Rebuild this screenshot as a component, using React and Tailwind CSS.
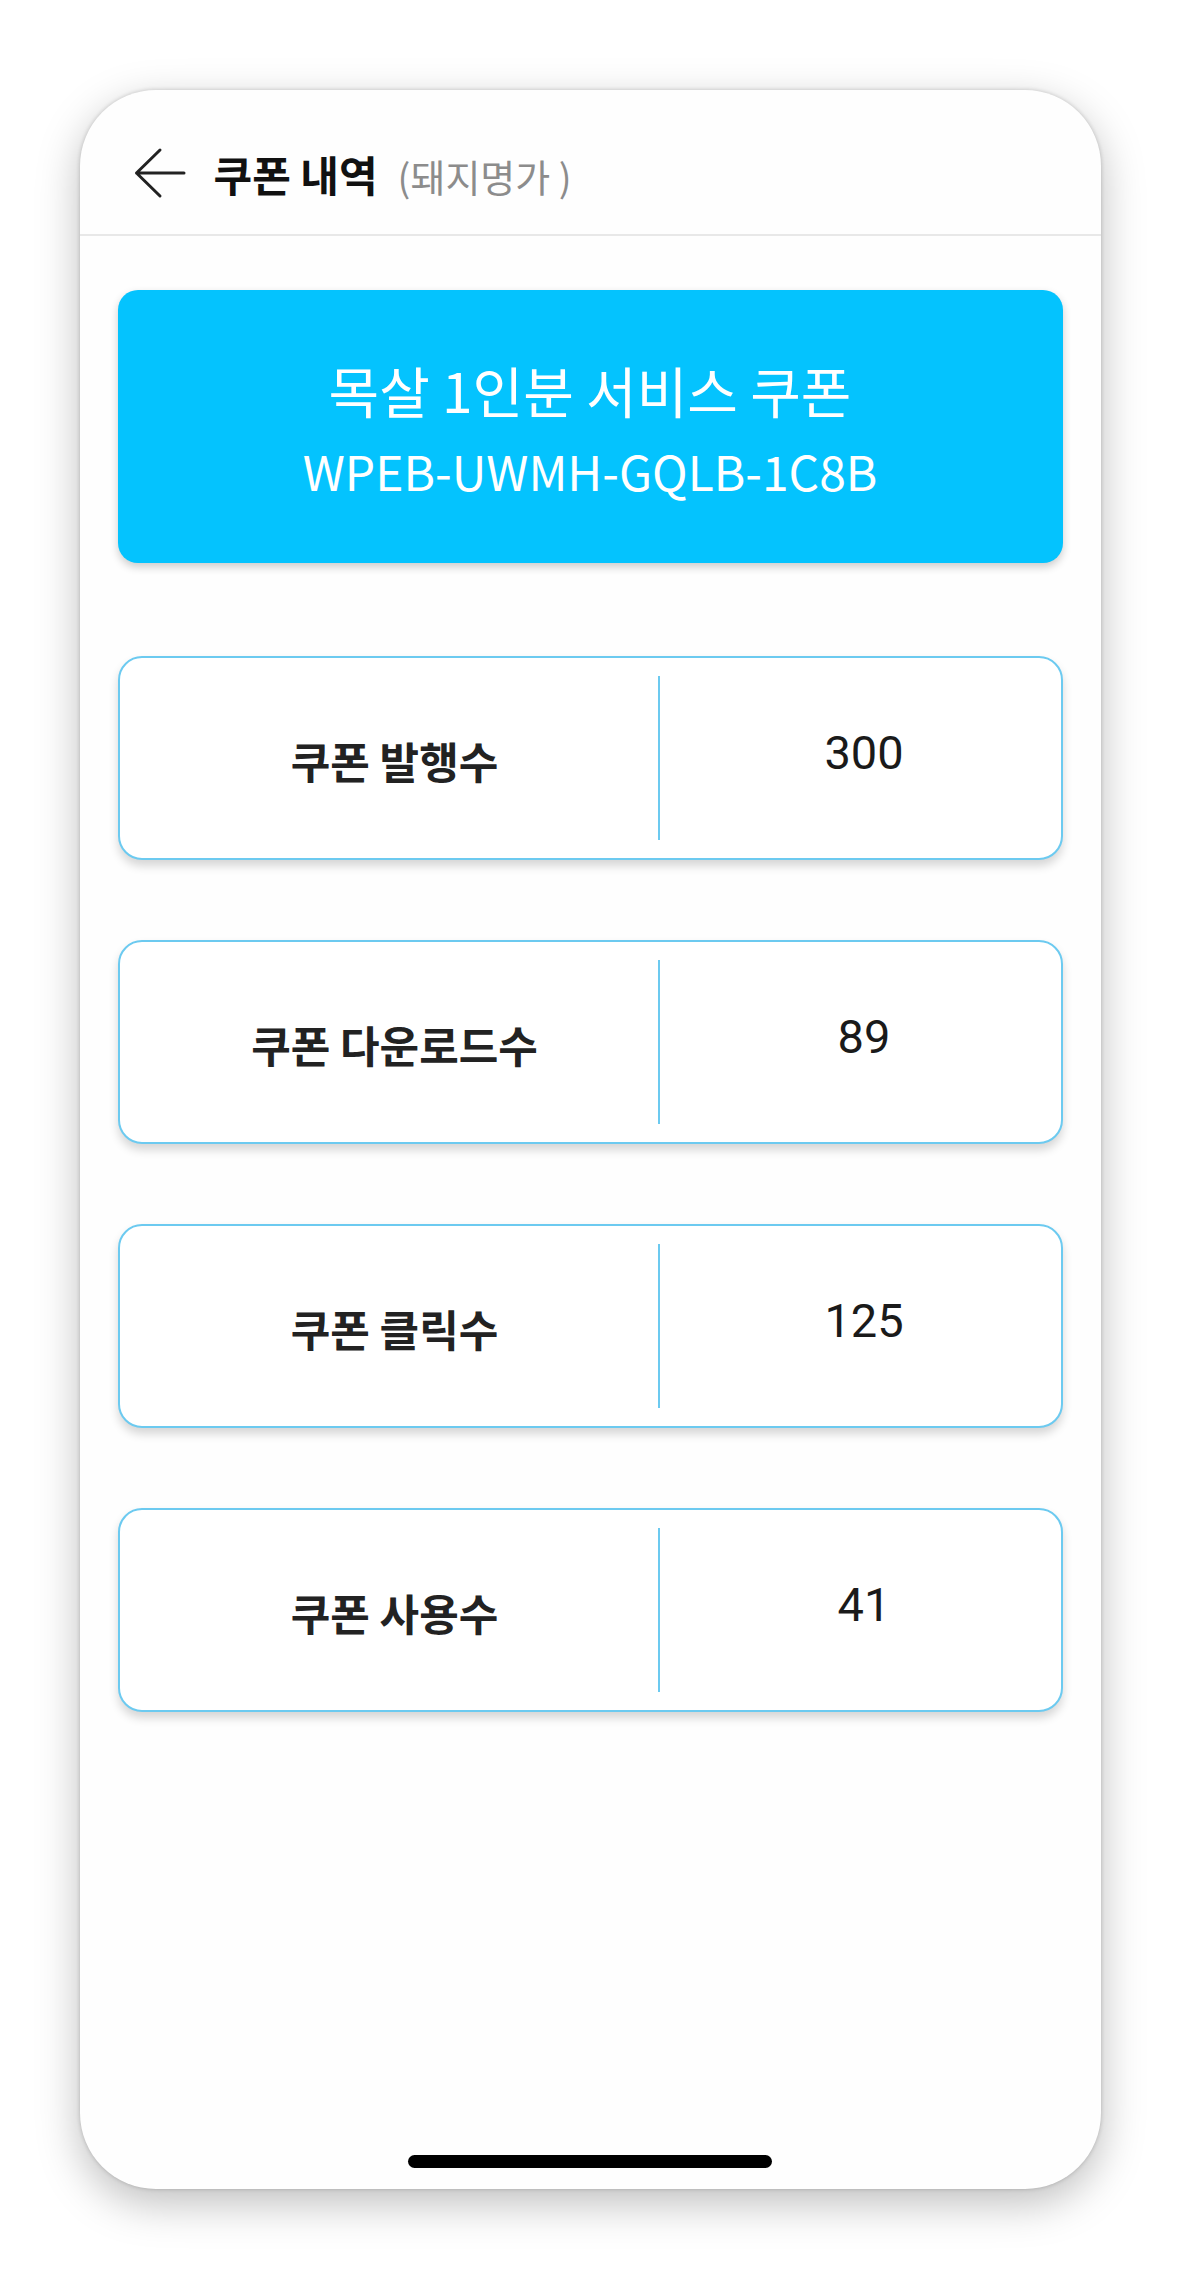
import React from "react";

const stats = [
  { label: "쿠폰 발행수", value: "300" },
  { label: "쿠폰 다운로드수", value: "89" },
  { label: "쿠폰 클릭수", value: "125" },
  { label: "쿠폰 사용수", value: "41" },
];

const BackArrow = () => (
  <svg width="52" height="52" viewBox="0 0 52 52" fill="none">
    <path
      d="M2.5 26H50M26 3 2.5 26 26 49"
      stroke="#222"
      strokeWidth="3"
      strokeLinecap="round"
      strokeLinejoin="round"
    />
  </svg>
);

const StatCard = ({ label, value }) => (
  <div className="flex h-[204px] rounded-[24px] border-2 border-[#6ccaf0] bg-white shadow-[0_6px_10px_rgba(0,0,0,0.16)]">
    <div className="flex w-[538px] items-center justify-center pl-[12px] pt-[4px] text-[43px] font-bold text-[#222]">
      {label}
    </div>
    <div className="my-[18px] w-[2px] bg-[#6ccaf0]" />
    <div className="flex flex-1 items-center justify-center pb-[10px] pl-[8px] font-['Roboto',sans-serif] text-[47px] text-[#1a1a1a]">
      {value}
    </div>
  </div>
);

const App = () => {
  return (
    <div className="min-h-[2280px] bg-white pt-[90px] font-['Noto_Sans_CJK_KR','Noto_Sans',sans-serif]">
      <div className="mx-auto flex h-[2099px] w-[1021px] flex-col overflow-hidden rounded-[76px] bg-[#fefefe] shadow-[0_14px_44px_rgba(0,0,0,0.26),0_0_4px_rgba(0,0,0,0.2)]">
        {/* header */}
        <div className="flex h-[146px] items-center border-b-2 border-[#e8e8e8] pl-[54px] pt-[22px]">
          <BackArrow />
          <div className="ml-[28px] flex items-baseline">
            <span className="text-[42px] font-bold text-[#111]">쿠폰 내역</span>
            <span className="ml-[20px] text-[38px] text-[#8c8c8c]">(돼지명가 )</span>
          </div>
        </div>

        <div className="flex flex-col px-[38px] pt-[54px]">
          {/* coupon banner */}
          <div className="flex h-[273px] flex-col items-center justify-center gap-[20px] rounded-[20px] bg-[#04c3fe] text-white shadow-[0_4px_8px_rgba(0,0,0,0.2)]">
            <div className="text-[55px] leading-[66px]">목살 1인분 서비스 쿠폰</div>
            <div className="text-[48px] leading-[56px]">WPEB-UWMH-GQLB-1C8B</div>
          </div>

          {/* stats */}
          <div className="mt-[93px] flex flex-col gap-[80px]">
            {stats.map((s) => (
              <StatCard key={s.label} label={s.label} value={s.value} />
            ))}
          </div>
        </div>

        <div className="flex-1" />
        <div className="mb-[21px] flex justify-center">
          <div className="h-[13px] w-[364px] rounded-full bg-black" />
        </div>
      </div>
    </div>
  );
};

export default App;
